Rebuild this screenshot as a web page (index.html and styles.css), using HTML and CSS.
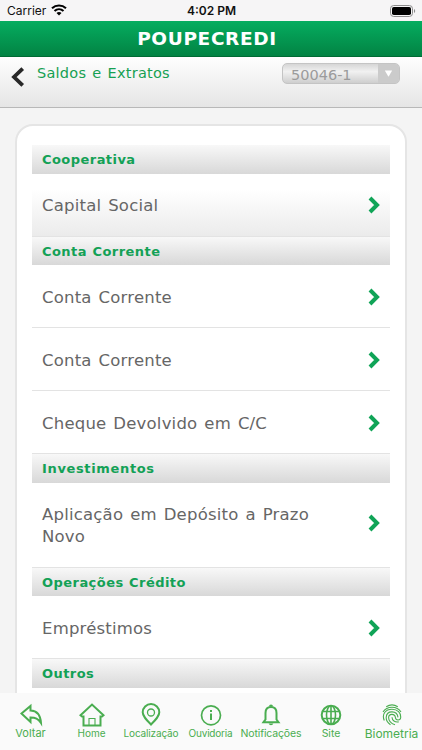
FILE: index.html
```html
<!DOCTYPE html>
<html lang="pt-BR">
<head>
<meta charset="utf-8">
<title>Poupecredi</title>
<link rel="stylesheet" href="styles.css">
</head>
<body>
<div class="screen">
  <div class="status">
    <div class="carrier"><span>Carrier</span>
      <svg width="16" height="12" viewBox="0 0 16 12"><path d="M1 4.3C5 .6 11 .6 15 4.3M3.5 7c2.6-2.4 6.4-2.4 9 0" fill="none" stroke="#000" stroke-width="2.1"/><path d="M5.5 9c1.5-1.3 3.5-1.3 5 0L8 11.5z"/></svg>
    </div>
    <div class="time">4:02 PM</div>
    <svg class="battery" width="26" height="12" viewBox="0 0 26 12"><rect x=".5" y=".5" width="22" height="11" rx="3.2" fill="none" stroke="#8d8d8d"/><rect x="2" y="2" width="19" height="8" rx="1.8"/><path d="M24 4c1.6.5 1.6 3.5 0 4z" fill="#8d8d8d"/></svg>
  </div>
  <header class="brand"><span>POUPECREDI</span></header>
  <div class="subbar">
    <svg class="back" width="14" height="20" viewBox="0 0 14 20"><path d="M11.7 1.6L3 10l8.7 8.4" fill="none" stroke="#282828" stroke-width="3.8"/></svg>
    <div class="page-title">Saldos e Extratos</div>
    <div class="account"><span class="account-number">50046-1</span><span class="account-arrow"><svg width="9" height="7" viewBox="0 0 9 7"><path d="M.8.5h7.4L4.5 6.8z" fill="#fff"/></svg></span></div>
  </div>
  <main class="content">
    <div class="card">
      <h2>Cooperativa</h2>
      <div class="row selected"><span>Capital Social</span><svg class="chev" viewBox="0 0 12 18"><path d="M2 2l7 7-7 7"/></svg></div>
      <h2>Conta Corrente</h2>
      <div class="row"><span>Conta Corrente</span><svg class="chev" viewBox="0 0 12 18"><path d="M2 2l7 7-7 7"/></svg></div>
      <div class="row"><span>Conta Corrente</span><svg class="chev" viewBox="0 0 12 18"><path d="M2 2l7 7-7 7"/></svg></div>
      <div class="row"><span>Cheque Devolvido em C/C</span><svg class="chev" viewBox="0 0 12 18"><path d="M2 2l7 7-7 7"/></svg></div>
      <h2 class="wide">Investimentos</h2>
      <div class="row tall"><span>Aplicação em Depósito a Prazo<br>Novo</span><svg class="chev" viewBox="0 0 12 18"><path d="M2 2l7 7-7 7"/></svg></div>
      <h2>Operações Crédito</h2>
      <div class="row"><span>Empréstimos</span><svg class="chev" viewBox="0 0 12 18"><path d="M2 2l7 7-7 7"/></svg></div>
      <h2>Outros</h2>
    </div>
  </main>
  <nav class="tabs">
    <div class="tab voltar"><svg width="24" height="24" viewBox="0 0 24 24"><path d="M2.500 10.500L11.500 3v4.500c7 .3 10 4.500 10.500 12.500-3-4.500-5.500-5.500-10.500-5.500v4.500z"/></svg><span>Voltar</span></div>
    <div class="tab home"><svg width="28" height="24" viewBox="0 0 26 24"><path d="M1.500 12.200L13 1.500l11.500 10.700-1.500 1.300h-1.500v9h-17v-9H3z"/><path d="M10 22.500v-7h6v7" stroke-width="1.100"/></svg><span>Home</span></div>
    <div class="tab local"><svg width="24" height="24" viewBox="0 0 24 24"><path d="M12 21.500C7 16.500 3.700 13.200 3.700 9.300a8.300 8.300 0 0 1 16.600 0c0 3.900-3.300 7.200-8.300 12.200z"/><circle cx="12" cy="9.500" r="3.500" stroke-width="1.300"/></svg><span>Localização</span></div>
    <div class="tab ouvidoria"><svg width="24" height="24" viewBox="0 0 24 24"><circle cx="12" cy="12.300" r="9.500" stroke-width="1.700"/><path d="M12 10.500v6.500M12 7v2"/></svg><span>Ouvidoria</span></div>
    <div class="tab notif"><svg width="24" height="24" viewBox="0 0 24 24"><path d="M4.500 19.200l2-2.700V10c0-3.500 2-6 5.500-6s5.500 2.500 5.500 6v6.500l2 2.700z"/><path d="M10 3.500a2 2 0 0 1 4 0zM9.700 20.500h4.600c-.6 2.300-4 2.300-4.600 0z" fill="#4aad50" stroke="none"/></svg><span>Notificações</span></div>
    <div class="tab site"><svg width="24" height="24" viewBox="0 0 24 24"><circle cx="12" cy="12" r="9.300"/><ellipse cx="12" cy="12" rx="4.500" ry="9.300" stroke-width="1.600"/><path d="M3.500 8.500h17M3.500 15.500h17M12 2.500v19" stroke-width="1.600"/></svg><span>Site</span></div>
    <div class="tab bio"><svg width="24" height="24" viewBox="0 0 24 24"><g stroke-width="1.100"><path d="M6.200 3.700c3.500-2.200 8.100-2.200 11.600 0M3 9c4-6.400 14-6.400 18 0M4.300 17.500C1.500 11 5.500 6.300 12 6.300c5.700 0 9 3.700 8.700 8.200-.2 3.300-5 3.300-5.300 0-.4-4.200-6.600-4.200-6.800 0 .1 3.500 2.500 6 6.400 7.300M10.500 21.700c-3-1.900-4.500-4.600-4.300-7.500.6-7.200 11-7 11.800.2M12 14.200c.2 3.300 2.800 5.300 6.700 4.700"/></g></svg><span>Biometria</span></div>
  </nav>
</div>
</body>
</html>
```
FILE: styles.css
```css
* { box-sizing: border-box; }
body { margin: 0; background: #f4f4f4; }
.screen { width: 422px; height: 750px; display: flex; flex-direction: column; overflow: hidden; font-family: "DejaVu Sans", Verdana, sans-serif; }
.status { height: 21px; flex: none; display: grid; grid-template-columns: 1fr auto 1fr; padding: 0 6px 0 7px; background: #f6f5f6; font-family: Inter, sans-serif; font-size: 12px; line-height: 21px; color: #111; }
.carrier { display: flex; gap: 5px; }
.carrier svg { margin-top: 4px; }
.time { font-weight: 600; }
.battery { justify-self: end; margin-top: 5px; }
.brand { height: 36px; flex: none; padding-right: 8px; background: linear-gradient(#05ad60, #028343); border-bottom: 1px solid #006b34; text-align: center; color: #fff; font-size: 18.500px; font-weight: bold; line-height: 35px; }
.brand span { letter-spacing: .65px; }
.subbar { height: 51px; flex: none; display: flex; padding: 0 22px 0 11px; background: linear-gradient(#fefefe, #e5e5e5); border-bottom: 1px solid #b8b8b8; }
.back { margin-top: 10px; }
.page-title { flex: 1; margin-left: 12px; line-height: 32px; font-size: 14.500px; letter-spacing: .25px; word-spacing: 1.200px; color: #16a052; }
.account { display: flex; width: 118px; height: 21px; margin-top: 6px; border: 1px solid #c4c4c4; border-radius: 5px; overflow: hidden; background: linear-gradient(#d6d6d6, #f1f1f1 40%, #cecece); }
.account-number { flex: 1; padding-left: 8px; font-size: 14.500px; line-height: 22px; color: #9b9b9b; }
.account-arrow { width: 21px; display: flex; justify-content: center; align-items: center; background: #cbcbcb; }
.content { flex: 1; min-height: 0; overflow: hidden; padding: 15.500px 15px 0; }
.card { width: 391.500px; height: 700px; padding: 19.500px 15px 0; border: 2px solid #e5e5e5; border-radius: 18px; background: #fff; }
h2 { height: 28.700px; margin: 0; padding-left: 10px; background: linear-gradient(#f8f8f8, #d8d8d8); font-size: 13px; line-height: 29px; letter-spacing: .45px; word-spacing: .5px; color: #13a156; }
h2.wide { letter-spacing: .65px; }
.row { height: 63px; display: flex; align-items: center; justify-content: space-between; padding: 1px 10px 0; border-bottom: 1px solid #e3e3e3; color: #666; font-size: 16.500px; line-height: 21.500px; letter-spacing: .2px; word-spacing: 1.500px; }
.row span { padding-top: 1px; }
.row.selected { background: linear-gradient(#fff 25%, #ebebeb); }
.row.tall { height: 84.500px; }
.chev { width: 12px; height: 18px; fill: none; stroke: #10a457; stroke-width: 4; }
.tall .chev { margin-bottom: 5px; }
.tabs { height: 57.500px; flex: none; display: grid; grid-template-columns: 61px 61px 58px 61px 60px 60px 61px; background: #fafafa; font-family: Inter, sans-serif; color: #4aad50; }
.tab { display: flex; flex-direction: column; align-items: center; padding-top: 10px; }
.tab svg { height: 24px; fill: none; stroke: #4aad50; stroke-width: 2; }
.tab span { font-size: 10px; line-height: 13px; white-space: nowrap; }
.voltar span { font-size: 11px; }
.local span { letter-spacing: -.15px; }
.ouvidoria span { letter-spacing: -.2px; }
.notif span { font-size: 10.500px; letter-spacing: -.15px; }
.site span { font-size: 10.500px; }
.bio span { font-size: 12px; }
```
